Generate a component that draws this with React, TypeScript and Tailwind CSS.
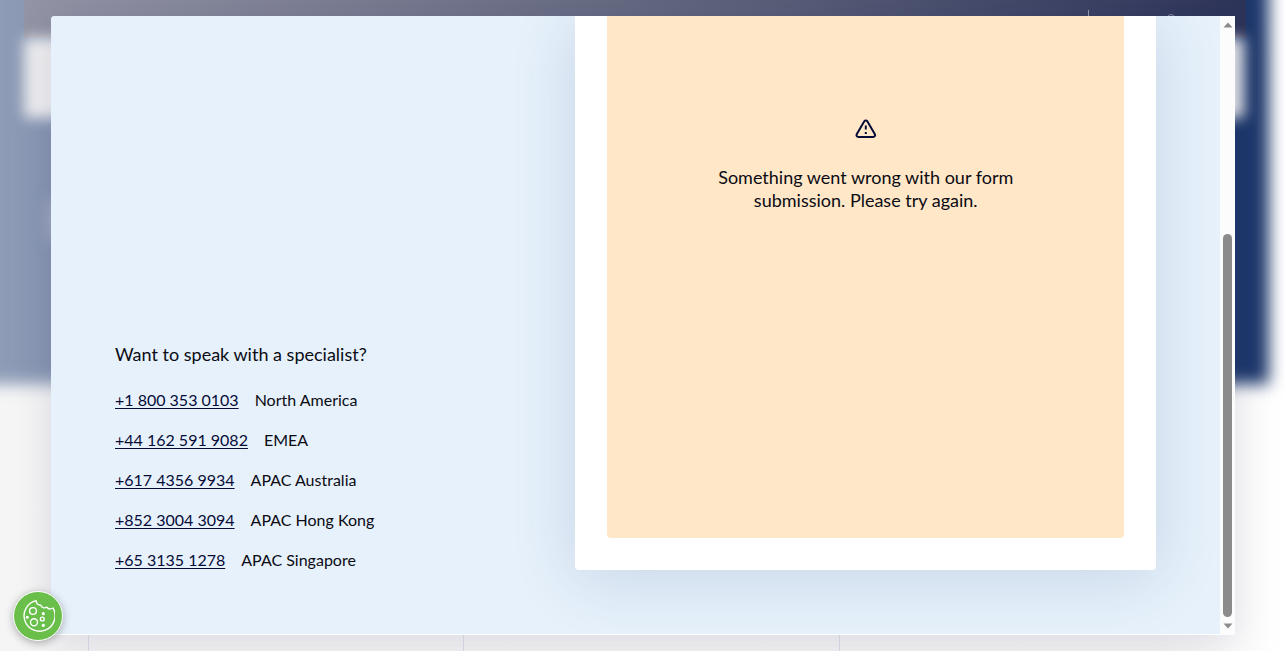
import React from "react";

type Contact = { phone: string; region: string };

const contacts: Contact[] = [
  { phone: "+1 800 353 0103", region: "North America" },
  { phone: "+44 162 591 9082", region: "EMEA" },
  { phone: "+617 4356 9934", region: "APAC Australia" },
  { phone: "+852 3004 3094", region: "APAC Hong Kong" },
  { phone: "+65 3135 1278", region: "APAC Singapore" },
];

function Backdrop() {
  return (
    <div aria-hidden="true" className="absolute inset-0 overflow-hidden bg-linear-to-r from-[#f5f5f5] from-90% to-white">
      <div className="-mt-6 -ml-6 mr-4 h-[408px] bg-linear-to-r from-[#8f9db8] via-[#475982] via-60% to-[#1c376b] blur-[8px]" />
      {/* Top navigation strip, blurred search bar and a few header marks */}
      <div className="absolute top-0 right-[39px] left-6 h-[38px] bg-linear-to-r from-[#9394a5] from-0% via-[#5b6079] via-60% to-[#2d3459]">
        <div className="absolute top-[10px] right-[157px] h-4 w-px bg-[#989cae]" />
        <div className="absolute top-[14px] right-[71px] size-2 rounded-full border border-[#878ca3]" />
      </div>
      <div className="absolute top-[38px] right-[41px] left-[24px] h-20 bg-[#efeff0] blur-[7px]" />
      <div className="absolute top-[200px] left-[50px] h-10 w-20 bg-[#b0b4c5] blur-[8px]" />
      <div className="absolute inset-x-0 bottom-0 grid h-4 grid-cols-[89px_375px_376px_1fr] divide-x divide-[#dcdfe9]">
        <span />
        <span />
        <span />
        <span />
      </div>
    </div>
  );
}

function WarningIcon() {
  return (
    <svg viewBox="0 0 24 24" className="size-6" fill="none" stroke="#060c38" strokeWidth="2" strokeLinecap="round" strokeLinejoin="round" aria-hidden="true">
      <path d="M10.3 4.3 2.7 17.2a1.9 1.9 0 0 0 1.7 2.8h14.8a1.9 1.9 0 0 0 1.7-2.8L13.3 4.3a1.8 1.8 0 0 0-3 0Z" />
      <path d="M11.8 8.5v4M11.8 15v2" strokeLinecap="butt" />
    </svg>
  );
}

function CookieIcon() {
  return (
    <svg viewBox="0 0 34 34" className="size-[34px]" fill="none" stroke="white" strokeWidth="1.4" strokeLinejoin="round" aria-hidden="true">
      <path d="M15.2 1.6A15.5 15.5 0 1 0 32 9C29.5 10.4 27 10.2 25.8 8.2C23.2 9.6 20.6 8.6 19.8 6.2C17.2 6.2 15 4.4 15.2 1.6Z" />
      <circle cx="12" cy="12" r="3.4" />
      <circle cx="13" cy="23.3" r="3.5" />
      <circle cx="21.3" cy="20" r="1.9" />
      <g fill="white" stroke="none">
        <circle cx="22.3" cy="14.7" r="1.6" />
        <circle cx="6.3" cy="18.3" r="1.5" />
        <circle cx="22.3" cy="26.3" r="1.6" />
      </g>
    </svg>
  );
}

function ScrollRail() {
  return (
    <div aria-hidden="true" className="flex w-[15px] shrink-0 flex-col items-center bg-[#fcfcfc] pt-1.5 pb-1.5">
      <svg viewBox="0 0 10 6" className="h-1.5 w-2.5" fill="#8b8b8b">
        <path d="M5 .5 9.5 5.5h-9Z" />
      </svg>
      <div className="flex min-h-0 w-[9px] flex-1 flex-col pt-1.5 pb-1.5">
        <div className="flex-[200]" />
        <div className="flex-[382] rounded-full bg-[#8b8b8b]" />
      </div>
      <svg viewBox="0 0 10 6" className="h-1.5 w-2.5" fill="#8b8b8b">
        <path d="M5 5.5.5.5h9Z" />
      </svg>
    </div>
  );
}

export default function App() {
  return (
    <div className="relative flex min-h-screen pt-4 pr-[50px] pb-4 pl-[51px] font-['Lato','Open_Sans',sans-serif] text-[#0b0b14]">
      <Backdrop />
      <div role="dialog" aria-label="Contact us" className="relative flex flex-1 overflow-hidden rounded-tl bg-white shadow-[0_8px_40px_rgba(20,20,70,0.12)]">
        <div className="mb-px grid flex-1 grid-cols-[46fr_58fr] overflow-hidden bg-[#e6f1fb] px-16">
          <section className="flex flex-col justify-end pb-[62px]">
            <h2 className="mb-[22px] text-lg leading-6">Want to speak with a specialist?</h2>
            <ul className="flex flex-col gap-4">
              {contacts.map(({ phone, region }) => (
                <li key={phone} className="flex gap-4 text-base leading-6">
                  <a href={`tel:${phone.replace(/ /g, "")}`} className="text-[#060c38] underline underline-offset-2">
                    {phone}
                  </a>
                  <span>{region}</span>
                </li>
              ))}
            </ul>
          </section>
          <section className="mb-16 flex rounded-b bg-white px-8 pb-8 shadow-[0_8px_64px_rgba(40,70,120,0.16)]">
            <div role="alert" className="flex flex-1 flex-col items-center rounded-b bg-[#ffe7c8] pt-[101px]">
              <WarningIcon />
              <p className="mt-[25px] w-80 text-center text-lg leading-[23px]">
                Something went wrong with our form submission. Please try again.
              </p>
            </div>
          </section>
        </div>
        <ScrollRail />
      </div>
      <button type="button" aria-label="Cookie settings" className="fixed bottom-[10px] left-[13px] grid size-[50px] place-items-center rounded-full border border-white bg-[#6abf4b] shadow-[0_2px_8px_rgba(0,0,0,0.3)]">
        <CookieIcon />
      </button>
    </div>
  );
}
